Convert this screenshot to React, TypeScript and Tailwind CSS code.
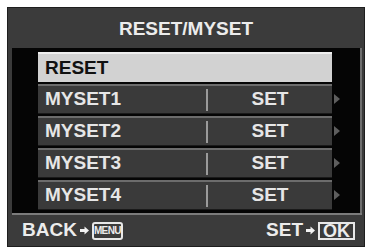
import React from "react";

const rows = ["MYSET1", "MYSET2", "MYSET3", "MYSET4"];

function Arrow() {
  return (
    <svg width="9" height="9" viewBox="0 0 9 9" className="mx-[3px]">
      <path d="M0 3h4.5V0.5L9 4.5 4.5 8.5V6H0z" fill="#f2f2f2" />
    </svg>
  );
}

export default function App() {
  return (
    <div className="w-[367px] h-[251px] bg-white pt-[7px] pl-[7px]" style={{ fontFamily: '"Liberation Sans", Arial, sans-serif' }}>
      <div className="w-[358px] h-[240px] bg-[#3b3b3b] border border-[#1e1e1e] flex flex-col">
        <div className="h-[40px] flex items-center justify-center pt-[3px] text-[19px] font-bold text-[#ececec]">
          RESET/MYSET
        </div>
        <div className="h-[165px] ml-[4px] mr-[2px] bg-[#050505] border-r-2 border-[#6e6e6e] pt-[4px] pl-[26px] flex flex-col gap-[2px]">
          <div className="w-[294px] h-[30px] bg-[#d2d2d2] border-t-2 border-[#efefef] flex items-center pl-[7px] text-[19px] font-bold text-[#111]">
            RESET
          </div>
          {rows.map((r) => (
            <div key={r} className="flex items-center">
              <div className="w-[294px] h-[30px] bg-[#3a3a3a] border-t-2 border-[#6c6c6c] border-b border-b-[#1a1a1a] flex items-center text-[19px] font-bold text-[#e6e6e6]">
                <span className="w-[168px] pl-[7px]">{r}</span>
                <span className="w-[2px] h-[22px] bg-[#9a9a9a]" />
                <span className="flex-1 text-center">SET</span>
              </div>
              <svg width="7" height="10" viewBox="0 0 7 10" className="ml-[2px]">
                <path d="M0 0L6 5 0 10z" fill="#5e5e5e" />
              </svg>
            </div>
          ))}
        </div>
        <div className="h-[2px] ml-[4px] mr-[2px] bg-[#7c7c7c]" />
        <div className="flex-1 flex items-center justify-between pl-[14px] pr-[9px] text-[19px] font-bold text-[#ececec]">
          <div className="flex items-center">
            <span>BACK</span>
            <Arrow />
            <span className="w-[31px] h-[18px] border-2 border-[#e8e8e8] rounded-[3px] flex items-center justify-center text-[10px] leading-none font-bold tracking-[-0.6px]">
              MENU
            </span>
          </div>
          <div className="flex items-center">
            <span>SET</span>
            <Arrow />
            <span className="h-[18px] w-[37px] border-2 border-[#e8e8e8] flex items-center justify-center text-[18px] leading-none">
              OK
            </span>
          </div>
        </div>
      </div>
    </div>
  );
}
